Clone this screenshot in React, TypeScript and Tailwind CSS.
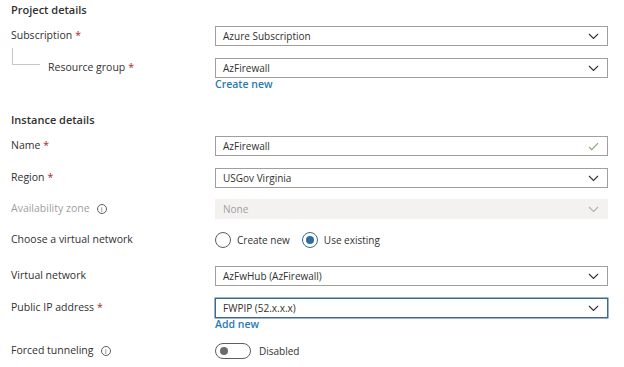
import React from "react";

const Req = () => <span className="text-[#a4262c] ml-[3px]">*</span>;

const Chevron = ({ light }: { light?: boolean }) => (
  <svg width="11" height="7" viewBox="0 0 11 7" className="shrink-0">
    <path d="M1 1 L5.5 5.5 L10 1" fill="none" stroke={light ? "#b3b0ad" : "#323130"} strokeWidth="1.1" />
  </svg>
);

const Check = () => (
  <svg width="11" height="9" viewBox="0 0 11 9" className="shrink-0">
    <path d="M1 4.8 L3.8 7.6 L10 1.2" fill="none" stroke="#8aa86a" strokeWidth="1.2" />
  </svg>
);

const Info = () => (
  <span className="inline-flex items-center justify-center w-[10px] h-[10px] rounded-full border border-[#605e5c] text-[7px] leading-none text-[#605e5c] ml-[7px] font-normal">
    i
  </span>
);

const Box = ({
  text,
  icon,
  disabled,
  focused,
}: {
  text: string;
  icon?: React.ReactNode;
  disabled?: boolean;
  focused?: boolean;
}) => (
  <div
    className={
      "w-[393px] h-[20px] flex items-center justify-between pl-[7px] pr-[8px] text-[10px] " +
      (disabled
        ? "bg-[#f3f2f1] text-[#a19f9d] border border-[#f3f2f1]"
        : focused
        ? "bg-white text-[#323130] border border-[#3b6a8c] shadow-[0_0_0_0.5px_#3b6a8c]"
        : "bg-white text-[#323130] border border-[#a19f9d]")
    }
  >
    <span>{text}</span>
    {icon}
  </div>
);

const Label = ({ children, muted }: { children: React.ReactNode; muted?: boolean }) => (
  <div
    className={
      "w-[204px] shrink-0 flex items-center text-[10.5px] font-medium " +
      (muted ? "text-[#a19f9d]" : "text-[#323130]")
    }
  >
    {children}
  </div>
);

const Radio = ({ checked, label }: { checked?: boolean; label: string }) => (
  <div className="flex items-center">
    <span
      className={
        "w-[16px] h-[16px] rounded-full border flex items-center justify-center " +
        (checked ? "border-[#2d6e9e]" : "border-[#605e5c]")
      }
    >
      {checked && <span className="w-[8px] h-[8px] rounded-full bg-[#2d6e9e]" />}
    </span>
    <span className="ml-[6px] text-[10px] text-[#323130]">{label}</span>
  </div>
);

export default function App() {
  return (
    <div
      className="w-[624px] h-[367px] bg-white overflow-hidden pl-[11px] text-[#323130]"
      style={{ fontFamily: '"Open Sans", "Noto Sans", sans-serif' }}
    >
      <div className="h-[20px] flex items-center text-[11px] font-semibold">Project details</div>

      <div className="mt-[6px] h-[20px] flex">
        <Label>
          Subscription
          <Req />
        </Label>
        <Box text="Azure Subscription" icon={<Chevron />} />
      </div>

      <div className="mt-[12px] h-[20px] flex">
        <Label>
          <div className="self-start -mt-[10px] ml-[1px] w-[28px] h-[17px] border-l border-b border-[#c8c6c4] shrink-0" />
          <span className="ml-[8px]">Resource group</span>
          <Req />
        </Label>
        <Box text="AzFirewall" icon={<Chevron />} />
      </div>

      <div className="h-[14px] flex items-center ml-[204px] text-[10.5px] font-semibold text-[#2b79b0]">
        Create new
      </div>

      <div className="mt-[18px] h-[20px] flex items-center text-[11px] font-semibold">Instance details</div>

      <div className="mt-[6px] h-[20px] flex">
        <Label>
          Name
          <Req />
        </Label>
        <Box text="AzFirewall" icon={<Check />} />
      </div>

      <div className="mt-[12px] h-[20px] flex">
        <Label>
          Region
          <Req />
        </Label>
        <Box text="USGov Virginia" icon={<Chevron />} />
      </div>

      <div className="mt-[11px] h-[20px] flex">
        <Label muted>
          Availability zone
          <Info />
        </Label>
        <Box text="None" icon={<Chevron light />} disabled />
      </div>

      <div className="mt-[13px] h-[16px] flex">
        <Label>Choose a virtual network</Label>
        <div className="flex items-center gap-[12px]">
          <Radio label="Create new" />
          <Radio checked label="Use existing" />
        </div>
      </div>

      <div className="mt-[18px] h-[20px] flex">
        <Label>Virtual network</Label>
        <Box text="AzFwHub (AzFirewall)" icon={<Chevron />} />
      </div>

      <div className="mt-[12px] h-[20px] flex">
        <Label>
          Public IP address
          <Req />
        </Label>
        <Box text="FWPIP (52.x.x.x)" icon={<Chevron />} focused />
      </div>

      <div className="h-[13px] flex items-center ml-[204px] text-[10.5px] font-semibold text-[#2b79b0]">
        Add new
      </div>

      <div className="mt-[12px] h-[16px] flex">
        <Label>
          Forced tunneling
          <Info />
        </Label>
        <div className="flex items-center">
          <span className="w-[36px] h-[16px] rounded-full border border-[#605e5c] flex items-center pl-[4px]">
            <span className="w-[8px] h-[8px] rounded-full bg-[#6e6c6a]" />
          </span>
          <span className="ml-[8px] text-[10px] text-[#323130]">Disabled</span>
        </div>
      </div>
    </div>
  );
}
